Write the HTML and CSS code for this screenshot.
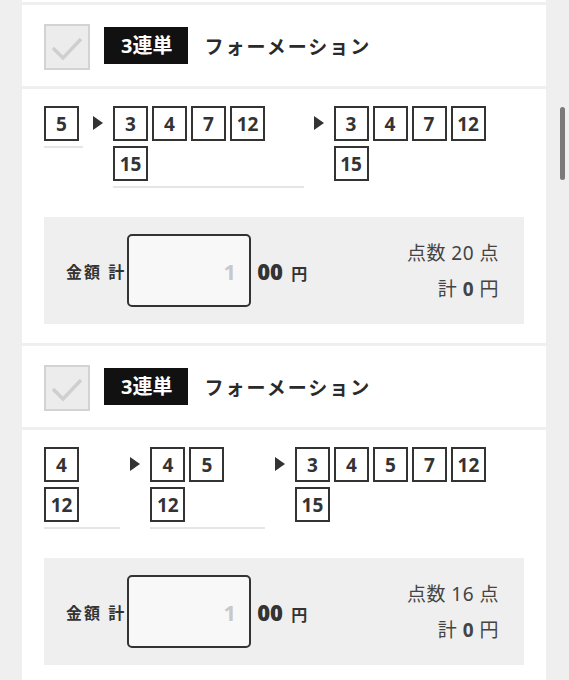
FILE: index.html
```html
<!DOCTYPE html>
<html lang="ja">
<head>
    <meta charset="UTF-8">
    <meta name="viewport" content="width=device-width, initial-scale=1.0">
    <title>投票内容</title>
    <link rel="stylesheet" href="styles.css">
</head>
<body>
    <div class="page">
        <div class="stub"></div>

        <section class="ticket">
            <div class="ticket-head">
                <span class="check">
                    <svg width="42" height="42" viewBox="0 0 42 42"><path d="M7 22 L17 32 L35 13" fill="none" stroke="#cfcfcf" stroke-width="3.5"/></svg>
                </span>
                <span class="bet-type">3連単</span>
                <span class="bet-method">フォーメーション</span>
            </div>
            <div class="ticket-body">
                <div class="picks">
                    <div class="pick-col">
                        <span class="num">5</span>
                    </div>
                    <span class="arrow"></span>
                    <div class="pick-col">
                        <span class="num">3</span><span class="num">4</span><span class="num">7</span><span class="num">12</span><span class="num">15</span>
                    </div>
                    <span class="arrow"></span>
                    <div class="pick-col last">
                        <span class="num">3</span><span class="num">4</span><span class="num">7</span><span class="num">12</span><span class="num">15</span>
                    </div>
                </div>
                <div class="amount">
                    <div class="amount-left">
                        <span class="amount-label">金額 計</span>
                        <input type="text" class="amount-input" value="1">
                        <span class="amount-unit"><b>00</b> 円</span>
                    </div>
                    <div class="amount-right">
                        <div>点数 20 点</div>
                        <div>計 <b>0</b> 円</div>
                    </div>
                </div>
            </div>
        </section>

        <section class="ticket">
            <div class="ticket-head">
                <span class="check">
                    <svg width="42" height="42" viewBox="0 0 42 42"><path d="M7 22 L17 32 L35 13" fill="none" stroke="#cfcfcf" stroke-width="3.5"/></svg>
                </span>
                <span class="bet-type">3連単</span>
                <span class="bet-method">フォーメーション</span>
            </div>
            <div class="ticket-body">
                <div class="picks">
                    <div class="pick-col">
                        <span class="num">4</span><span class="num">12</span>
                    </div>
                    <span class="arrow"></span>
                    <div class="pick-col">
                        <span class="num">4</span><span class="num">5</span><span class="num">12</span>
                    </div>
                    <span class="arrow"></span>
                    <div class="pick-col last">
                        <span class="num">3</span><span class="num">4</span><span class="num">5</span><span class="num">7</span><span class="num">12</span><span class="num">15</span>
                    </div>
                </div>
                <div class="amount">
                    <div class="amount-left">
                        <span class="amount-label">金額 計</span>
                        <input type="text" class="amount-input" value="1">
                        <span class="amount-unit"><b>00</b> 円</span>
                    </div>
                    <div class="amount-right">
                        <div>点数 16 点</div>
                        <div>計 <b>0</b> 円</div>
                    </div>
                </div>
            </div>
        </section>
    </div>

    <div class="scroll-thumb"></div>
</body>
</html>
```

FILE: styles.css
```css
body {
    margin: 0;
    background-color: #efefef;
    font-family: "Noto Sans", "Noto Sans CJK JP", sans-serif;
    color: #333;
}
.page {
    margin: 0 23px 0 22px;
    display: flex;
    flex-direction: column;
    gap: 3px;
}
.stub {
    height: 2px;
    background: white;
}
.ticket {
    display: flex;
    flex-direction: column;
    gap: 3px;
}
.ticket-head {
    background: white;
    height: 81px;
    display: flex;
    align-items: center;
    padding: 0 22px;
}
.check {
    width: 46px;
    height: 46px;
    box-sizing: border-box;
    border: 2px solid #d3d3d3;
    background-color: #ececec;
    margin-top: 3px;
    margin-right: 14px;
    display: flex;
}
.bet-type {
    height: 37px;
    line-height: 37px;
    padding: 0 16px 0 17px;
    background-color: #111;
    color: white;
    font-size: 20px;
    font-weight: bold;
    margin-right: 16px;
}
.bet-method {
    font-size: 19px;
    font-weight: 600;
    letter-spacing: 2px;
    color: #2a2a2a;
}
.ticket-body {
    background: white;
    padding: 17px 22px 19px;
}
.picks {
    display: flex;
    align-items: flex-start;
}
.pick-col {
    flex: 0 1 auto;
    display: flex;
    flex-wrap: wrap;
    row-gap: 5px;
    padding-bottom: 5px;
    border-bottom: 2px solid #e6e6e6;
}
.pick-col.last {
    border-bottom: none;
}
.num {
    width: 35px;
    height: 35px;
    box-sizing: border-box;
    border: 2px solid #333;
    margin-right: 4px;
    display: flex;
    align-items: center;
    justify-content: center;
    font-size: 19px;
    font-weight: bold;
    color: #333;
}
.arrow {
    flex: none;
    width: 30px;
    height: 33px;
    display: flex;
    align-items: center;
    justify-content: center;
}
.arrow::before {
    content: "";
    border-left: 10px solid #333;
    border-top: 7.5px solid transparent;
    border-bottom: 7.5px solid transparent;
}
.amount {
    margin-top: 29px;
    height: 107px;
    background-color: #efefef;
    display: flex;
    align-items: center;
    justify-content: space-between;
    padding: 0 25px 0 22px;
}
.amount-left {
    display: flex;
    align-items: center;
}
.amount-label {
    font-size: 16px;
    font-weight: bold;
    letter-spacing: 2px;
}
.amount-input {
    width: 124px;
    height: 73px;
    box-sizing: border-box;
    margin: 0 6px 0 1px;
    border: 2px solid #333;
    border-radius: 5px;
    background-color: #f8f8f8;
    text-align: right;
    padding: 0 13px 0 0;
    font-family: "Noto Sans", sans-serif;
    font-size: 22px;
    font-weight: bold;
    color: #c8c8c8;
}
.amount-unit {
    font-size: 16px;
    font-weight: bold;
}
.amount-unit b {
    font-size: 22px;
    margin-right: 4px;
}
.amount-right {
    text-align: right;
    font-size: 19px;
    line-height: 36px;
    letter-spacing: 0.5px;
    color: #444;
}
.scroll-thumb {
    position: fixed;
    left: 560px;
    top: 107px;
    width: 5px;
    height: 73px;
    border-radius: 3px;
    background-color: #7a7a7a;
}
```
